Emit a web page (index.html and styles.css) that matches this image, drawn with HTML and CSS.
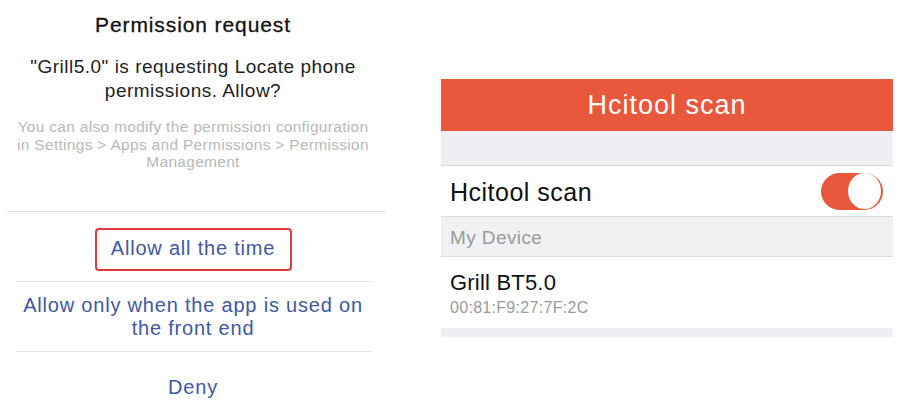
FILE: index.html
```html
<!DOCTYPE html>
<html lang="en">
<head>
    <meta charset="UTF-8">
    <meta name="viewport" content="width=device-width, initial-scale=1.0">
    <title>Permission request / Hcitool scan</title>
    <link rel="stylesheet" href="styles.css">
</head>
<body>
    <div class="page">
        <!-- Android style permission dialog -->
        <div class="dialog">
            <h1 class="dialog-title">Permission request</h1>
            <p class="dialog-text">"Grill5.0" is requesting Locate phone permissions. Allow?</p>
            <p class="dialog-hint">You can also modify the permission configuration in Settings &gt; Apps and Permissions &gt; Permission Management</p>

            <div class="divider divider-full"></div>
            <div class="option option-first">
                <span class="highlight">Allow all the time</span>
            </div>
            <div class="divider"></div>
            <div class="option option-second">Allow only when the app is used on the front end</div>
            <div class="divider"></div>
            <div class="option option-deny">Deny</div>
        </div>

        <!-- iOS style settings screen -->
        <div class="phone">
            <div class="nav-bar">Hcitool scan</div>
            <div class="band"></div>
            <div class="row switch-row">
                <span>Hcitool scan</span>
                <span class="toggle"><span class="knob"></span></span>
            </div>
            <div class="section">My Device</div>
            <div class="row device-row">
                <div class="device-name">Grill BT5.0</div>
                <div class="device-mac">00:81:F9:27:7F:2C</div>
            </div>
            <div class="band band-bottom"></div>
        </div>
    </div>
</body>
</html>
```

FILE: styles.css
```css
body { margin: 0; background: #fff; font-family: "Liberation Sans", Arial, sans-serif; }
.page { display: flex; align-items: flex-start; width: 901px; height: 400px; overflow: hidden; }

/* dialog on the left */
.dialog { width: 386px; text-align: center; padding-top: 13px; }
.dialog-title { font-size: 21px; line-height: 24px; font-weight: normal; color: #111; margin: 0; letter-spacing: 0.9px; -webkit-text-stroke: 0.3px #111; }
.dialog-text { font-size: 19px; line-height: 23.5px; color: #222; margin: 18px 16px 0; letter-spacing: 0.5px; }
.dialog-hint { font-size: 15.5px; line-height: 17.5px; color: #b8b8b8; margin: 16px 12px 0; letter-spacing: 0.3px; }
.divider { height: 1px; background: #e6e6e6; margin: 0 14px 0 16px; }
.divider-full { margin: 40px 0 0 7px; background: #dedede; }
.option { font-size: 20px; line-height: 22.5px; color: #4058a6; letter-spacing: 0.8px; }
.option-first { padding: 16px 0 10px; }
.highlight { display: inline-block; box-sizing: border-box; width: 197px; padding: 6px 0 9px; line-height: 24px; border: 2px solid #e23a3e; border-radius: 4px; }
.option-second { padding: 12.5px 20px 11.5px; }
.option-deny { padding-top: 24px; }

/* phone screen on the right */
.phone { width: 452px; margin: 79px 0 0 55px; }
.nav-bar { height: 52px; line-height: 52px; background: #e8583d; color: #fff; text-align: center; font-size: 27px; letter-spacing: 1px; }
.band { height: 34px; background: #efeff3; border-bottom: 1px solid #dcdcdf; }
.band-bottom { height: 9px; border-bottom: none; }
.row { background: #fff; padding: 0 10px 0 9px; }
.switch-row { display: flex; align-items: center; justify-content: space-between; height: 50px; font-size: 25px; color: #111; border-bottom: 1px solid #dcdcdf; }
.switch-row span:first-child { padding-top: 3px; letter-spacing: 0.5px; }
.toggle { display: flex; justify-content: flex-end; align-items: center; box-sizing: border-box; width: 62px; height: 37px; border-radius: 19px; background: #e8583d; padding: 2px; }
.knob { width: 33px; height: 33px; border-radius: 50%; background: #fff; }
.section { height: 39px; line-height: 41px; background: #f1f1f4; color: #9a9a9a; font-size: 19px; letter-spacing: 0.4px; padding-left: 9px; border-bottom: 1px solid #dcdcdf; }
.device-row { padding-top: 13px; height: 58px; }
.device-name { font-size: 22px; line-height: 26px; color: #111; letter-spacing: 0.2px; }
.device-mac { font-size: 16px; line-height: 20px; color: #9a9a9a; margin-top: 2px; letter-spacing: 0.3px; }
```
